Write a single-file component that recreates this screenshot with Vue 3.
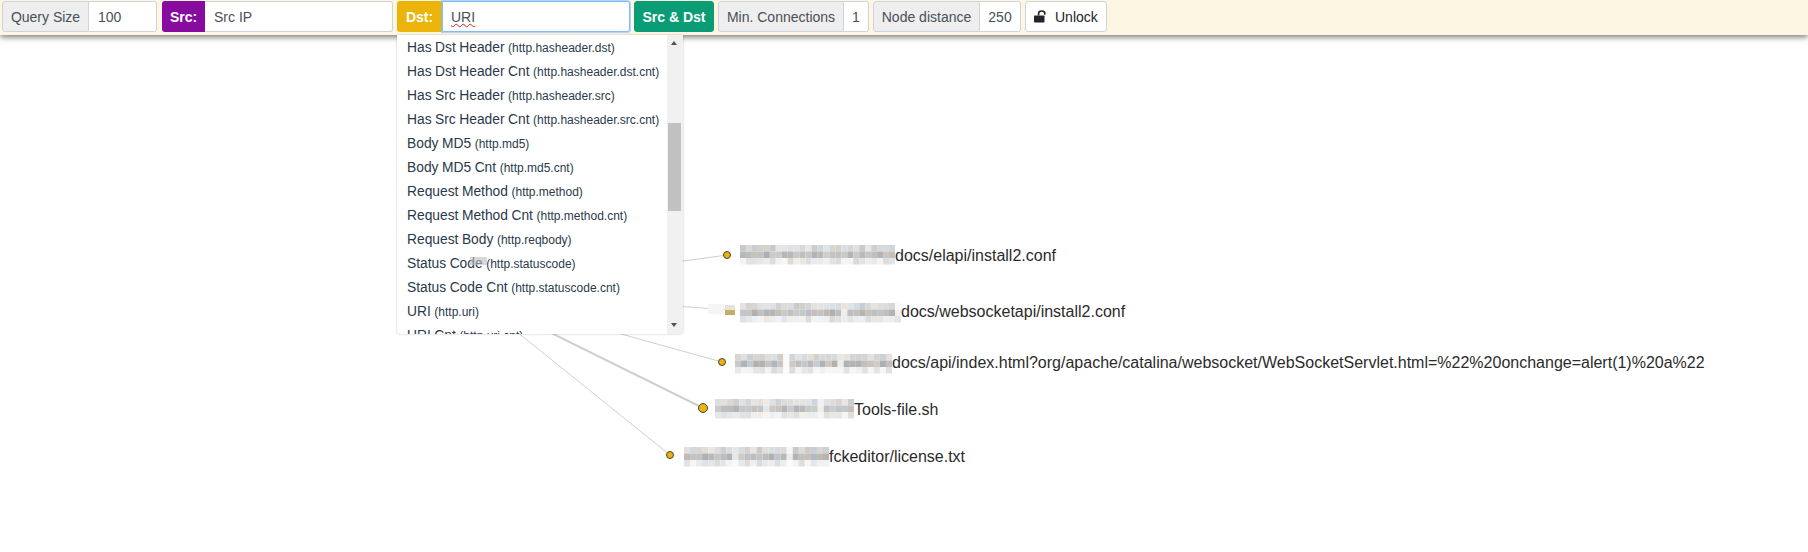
<script setup>
const fields = [
  ['Has Dst Header', 'http.hasheader.dst'],
  ['Has Dst Header Cnt', 'http.hasheader.dst.cnt'],
  ['Has Src Header', 'http.hasheader.src'],
  ['Has Src Header Cnt', 'http.hasheader.src.cnt'],
  ['Body MD5', 'http.md5'],
  ['Body MD5 Cnt', 'http.md5.cnt'],
  ['Request Method', 'http.method'],
  ['Request Method Cnt', 'http.method.cnt'],
  ['Request Body', 'http.reqbody'],
  ['Status Code', 'http.statuscode'],
  ['Status Code Cnt', 'http.statuscode.cnt'],
  ['URI', 'http.uri'],
  ['URI Cnt', 'http.uri.cnt']
]

const hub = { x: 466, y: 291 }
const nodes = [
  { x: 727, y: 255, r: 3.5, w: 1, tx: 895, ty: 261, text: 'docs/elapi/install2.conf', mx: 740, my: 245, mw: 155 },
  { x: 730, y: 310, r: 3.5, w: 1, tx: 901, ty: 317, text: 'docs/websocketapi/install2.conf', mx: 740, my: 303, mw: 161 },
  { x: 722, y: 362, r: 3.5, w: 1, tx: 892, ty: 367.5, text: 'docs/api/index.html?org/apache/catalina/websocket/WebSocketServlet.html=%22%20onchange=alert(1)%20a%22', mx: 735, my: 354, mw: 157 },
  { x: 703, y: 408, r: 4.5, w: 2, tx: 854, ty: 414.5, text: 'Tools-file.sh', mx: 715, my: 399, mw: 139 },
  { x: 670, y: 455, r: 3.5, w: 1, tx: 829, ty: 461.5, text: 'fckeditor/license.txt', mx: 684, my: 447, mw: 145 }
]

let seed = 11
function rnd() {
  seed = (seed * 16807) % 2147483647
  return seed / 2147483647
}
const cells = []
for (const n of nodes) {
  const cols = Math.round(n.mw / 6)
  const size = n.mw / cols
  for (let c = 0; c < cols; c++) {
    const gap = c % 9 === 8 && rnd() < 0.7
    for (let r = 0; r < 3; r++) {
      const base = r === 1 ? 190 : r === 0 ? 215 : 232
      const v = Math.min(250, Math.round((gap ? 240 : base) + rnd() * 30 - 14))
      const tint = Math.round(rnd() * 12 - 6)
      cells.push({
        x: n.mx + c * size,
        y: n.my + r * 6.5,
        w: size,
        fill: `rgb(${v + tint},${v},${v - tint})`
      })
    }
  }
}
</script>

<template>
  <div class="page">
    <header class="toolbar">
      <div class="group g-query">
        <span class="addon a-query">Query Size</span>
        <span class="input">100</span>
      </div>
      <div class="group g-src">
        <span class="addon strong src">Src:</span>
        <span class="input">Src IP</span>
      </div>
      <div class="group g-dst">
        <span class="addon strong dst">Dst:</span>
        <span class="input focus"><span class="misspelt">URI</span></span>
      </div>
      <button class="swap">Src &amp; Dst</button>
      <div class="group g-min">
        <span class="addon a-min">Min. Connections</span>
        <span class="input center">1</span>
      </div>
      <div class="group g-node">
        <span class="addon a-node">Node distance</span>
        <span class="input center">250</span>
      </div>
      <button class="unlock">
        <svg class="lock" viewBox="0 0 16 13" width="16" height="13" aria-hidden="true">
          <rect x="0" y="5.5" width="10.5" height="7" rx="0.8" fill="#212529" />
          <path d="M4.6 5.5V3.4C4.6 1.9 5.9 1 7.6 1S10.8 1.9 10.8 3.4V4.8" fill="none" stroke="#212529" stroke-width="1.6" />
        </svg>
        Unlock
      </button>
    </header>

    <svg class="graph" width="1808" height="552">
      <line
        v-for="n in nodes"
        :key="'l' + n.x"
        :x1="hub.x"
        :y1="hub.y"
        :x2="n.x"
        :y2="n.y"
        stroke="#cfcfcf"
        :stroke-width="n.w"
      />
      <circle
        v-for="n in nodes"
        :key="'c' + n.x"
        :cx="n.x"
        :cy="n.y"
        :r="n.r"
        fill="#ecb30a"
        stroke="#444"
        stroke-width="1"
      />
      <text
        v-for="n in nodes"
        :key="'t' + n.x"
        :x="n.tx"
        :y="n.ty"
        class="label"
      >{{ n.text }}</text>
      <rect
        v-for="(c, i) in cells"
        :key="i"
        :x="c.x"
        :y="c.y"
        :width="c.w"
        height="6.5"
        :fill="c.fill"
      />
      <rect x="708" y="304" width="16" height="10" fill="#f6f5f3" />
      <rect x="725" y="305" width="10" height="5" fill="#e8e3d2" />
      <rect x="725" y="310" width="10" height="5" fill="#c2ae68" />
      <rect x="516" y="331" width="2" height="2" fill="#e0933a" />
      <rect x="519" y="331" width="2" height="2" fill="#4a90c8" />
    </svg>

    <div class="menu">
      <ul class="list">
        <li v-for="f in fields" :key="f[1]" class="item">{{ f[0] }} <small>({{ f[1] }})</small></li>
      </ul>
      <div class="patch"></div>
      <div class="scrollbar">
        <span class="arrow up"></span>
        <span class="thumb"></span>
        <span class="arrow down"></span>
      </div>
    </div>
  </div>
</template>

<style scoped>
.page {
  position: relative;
  width: 1808px;
  height: 552px;
  overflow: hidden;
  background: #fff;
  font-family: "Liberation Sans", Arial, sans-serif;
  font-size: 14px;
  color: #212529;
}
.toolbar {
  position: relative;
  z-index: 2;
  box-sizing: border-box;
  display: flex;
  gap: 4px;
  height: 35px;
  padding: 1px 2px;
  background: #fdf6e3;
  box-shadow: 0 2px 6px rgba(0, 0, 0, 0.55);
}
.group {
  display: flex;
  height: 31px;
  box-sizing: border-box;
}
.g-query { width: 155px; margin-right: 1px; }
.g-src { width: 231px; }
.g-dst { width: 233px; }
.g-min { width: 151px; }
.g-node { width: 148px; }
.addon {
  box-sizing: border-box;
  display: flex;
  align-items: center;
  justify-content: center;
  flex: none;
  background: #eee;
  color: #495057;
  border: 1px solid #ced4da;
  border-radius: 3px 0 0 3px;
}
.a-query { width: 87px; }
.a-min { width: 126px; }
.a-node { width: 107px; }
.strong {
  font-weight: 700;
  color: #fff;
  border: none;
}
.src { width: 43px; background: #860b9e; }
.dst { width: 45px; background: #ecb30a; }
.input {
  box-sizing: border-box;
  flex: 1;
  display: flex;
  align-items: center;
  padding: 0 9px;
  background: #fff;
  color: #495057;
  border: 1px solid #ced4da;
  border-left: none;
  border-radius: 0 3px 3px 0;
}
.center { justify-content: center; padding: 0; }
.focus {
  padding: 0 8px;
  border: 1px solid #80bdff;
  box-shadow: 0 0 0 1px rgba(128, 189, 255, 0.6);
  z-index: 1;
}
.misspelt {
  text-decoration: underline wavy #d22;
  text-decoration-thickness: 1px;
}
.swap {
  box-sizing: border-box;
  width: 80px;
  height: 31px;
  padding: 0;
  font: 700 14px "Liberation Sans", Arial, sans-serif;
  color: #fff;
  background: #0a9d75;
  border: 1px solid #0a9d75;
  border-radius: 3px;
}
.unlock {
  box-sizing: border-box;
  display: flex;
  align-items: center;
  width: 82px;
  height: 31px;
  padding: 0 0 0 8px;
  gap: 5px;
  font: 14px "Liberation Sans", Arial, sans-serif;
  color: #212529;
  background: #fff;
  border: 1px solid #ced4da;
  border-radius: 3px;
}
.lock { flex: none; }
.graph {
  position: absolute;
  left: 0;
  top: 0;
}
.label {
  font-family: "Liberation Sans", Arial, sans-serif;
  font-size: 16px;
  fill: #2b2b2b;
}
.menu {
  position: absolute;
  z-index: 3;
  left: 397px;
  top: 35px;
  width: 286px;
  height: 299px;
  overflow: hidden;
  background: #fff;
  border-radius: 0 0 4px 4px;
  box-shadow: 0 0 2px rgba(0, 0, 0, 0.3);
}
.list {
  margin: 0;
  padding: 1px 0 0;
  list-style: none;
}
.item {
  height: 24px;
  line-height: 24px;
  padding-left: 10px;
  white-space: nowrap;
  font-size: 13.8px;
  word-spacing: -0.3px;
  color: #2a3a4a;
}
.item small { font-size: 12px; word-spacing: 0; }
.patch {
  position: absolute;
  left: 73px;
  top: 222px;
  width: 17px;
  height: 8px;
  background: rgba(190, 190, 190, 0.6);
}
.scrollbar {
  position: absolute;
  top: 0;
  right: 0;
  bottom: 0;
  width: 16px;
  background: #f1f1f1;
}
.thumb {
  position: absolute;
  left: 1px;
  right: 2px;
  top: 88px;
  height: 88px;
  background: #c1c1c1;
}
.arrow {
  position: absolute;
  left: 4px;
  width: 0;
  height: 0;
  border-left: 3.5px solid transparent;
  border-right: 3.5px solid transparent;
}
.up { top: 6px; border-bottom: 4px solid #505050; }
.down { bottom: 7px; border-top: 4px solid #505050; }
</style>
